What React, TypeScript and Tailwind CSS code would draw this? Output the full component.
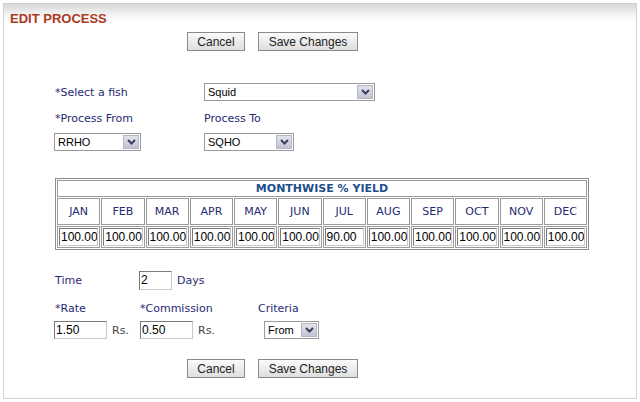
import React from 'react';

const months = ['JAN', 'FEB', 'MAR', 'APR', 'MAY', 'JUN', 'JUL', 'AUG', 'SEP', 'OCT', 'NOV', 'DEC'];
const yields = ['100.00', '100.00', '100.00', '100.00', '100.00', '100.00', '90.00', '100.00', '100.00', '100.00', '100.00', '100.00'];

function Btn({ label, className }: { label: string; className: string }) {
  return (
    <button
      className={`h-[19px] border border-[#8a8a8a] bg-gradient-to-b from-[#fbfbfb] to-[#dedede] text-[12px] leading-none text-[#222] font-['Liberation_Sans',Arial,sans-serif] ${className}`}
    >
      {label}
    </button>
  );
}

function Select({ value, className }: { value: string; className: string }) {
  return (
    <div className={`h-[18px] flex items-stretch border border-[#9a9a9a] bg-white ${className}`}>
      <span className="flex-1 pl-[3px] text-[11px] leading-[16px] text-black font-['Liberation_Sans',Arial,sans-serif]">{value}</span>
      <span className="w-[16px] m-[1px] flex items-center justify-center bg-gradient-to-b from-[#e2e3ec] to-[#c2c4d4] border border-[#b4b6c6]">
        <svg width="9" height="6" viewBox="0 0 9 6">
          <path d="M1 1 L4.5 4.5 L8 1" fill="none" stroke="#3c3f5c" strokeWidth="2" />
        </svg>
      </span>
    </div>
  );
}

function TextBox({ value, className }: { value: string; className: string }) {
  return (
    <div
      className={`h-[18px] border border-[#7a7a7a] border-b-[#c8c8c8] border-r-[#c8c8c8] bg-white pl-[1px] text-[12px] leading-[16px] text-black overflow-hidden whitespace-nowrap font-['Liberation_Sans',Arial,sans-serif] ${className}`}
    >
      {value}
    </div>
  );
}

export default function App() {
  return (
    <div className="w-[640px] h-[402px] bg-white overflow-hidden font-['DejaVu_Sans',Verdana,sans-serif]">
      <div className="mt-[3px] ml-[3px] w-[634px] h-[396px] border border-[#d2d2d2] border-t-0">
        {/* Header */}
        <div className="h-[19px] bg-gradient-to-b from-[#d6d6d6] via-[#f0f0f0] to-white border-t border-[#cfcfcf] pl-[6px] pt-[2px]">
          <span className="text-[13px] leading-[14px] font-bold text-[#ad3a1e] font-['Liberation_Sans',Arial,sans-serif]">EDIT PROCESS</span>
        </div>

        <div className="text-[11px] leading-[13px] text-[#1f2a72]">
          {/* Top buttons */}
          <div className="mt-[10px] pl-[183px] flex gap-[13px]">
            <Btn label="Cancel" className="w-[58px]" />
            <Btn label="Save Changes" className="w-[100px]" />
          </div>

          {/* Fish */}
          <div className="mt-[32px] pl-[51px] flex items-center">
            <span className="w-[149px]">*Select a fish</span>
            <Select value="Squid" className="w-[171px]" />
          </div>

          {/* Process labels */}
          <div className="mt-[11px] pl-[51px] flex">
            <span className="w-[149px]">*Process From</span>
            <span>Process To</span>
          </div>
          <div className="mt-[8px] pl-[50px] flex">
            <Select value="RRHO" className="w-[87px]" />
            <div className="w-[63px]" />
            <Select value="SQHO" className="w-[90px]" />
          </div>

          {/* Yield table */}
          <div className="mt-[27px] pl-[51px]">
            <table className="w-[534px] table-fixed border-separate border-spacing-[1px] border border-[#8c8c8c]">
              <tbody>
                <tr>
                  <td colSpan={12} className="h-[17px] border border-[#9a9a9a] text-center font-bold text-[#1c4f8c]">
                    MONTHWISE % YIELD
                  </td>
                </tr>
                <tr>
                  {months.map(m => (
                    <td key={m} className="h-[27px] border border-[#9a9a9a] text-center text-[#1f2a72]">{m}</td>
                  ))}
                </tr>
                <tr>
                  {yields.map((v, i) => (
                    <td key={i} className="h-[21px] border border-[#9a9a9a] p-[1px]">
                      <TextBox value={v} className="w-full" />
                    </td>
                  ))}
                </tr>
              </tbody>
            </table>
          </div>

          {/* Time */}
          <div className="mt-[21px] pl-[51px] flex items-center">
            <span className="w-[84px]">Time</span>
            <TextBox value="2" className="w-[33px] h-[19px]" />
            <span className="ml-[5px]">Days</span>
          </div>

          {/* Rate / Commission / Criteria */}
          <div className="mt-[12px] pl-[51px] flex">
            <span className="w-[85px]">*Rate</span>
            <span className="w-[118px]">*Commission</span>
            <span>Criteria</span>
          </div>
          <div className="mt-[6px] pl-[50px] flex items-center">
            <TextBox value="1.50" className="w-[53px]" />
            <span className="ml-[5px] w-[28px] text-[#444]">Rs.</span>
            <TextBox value="0.50" className="w-[53px]" />
            <span className="ml-[5px] w-[66px] text-[#444]">Rs.</span>
            <Select value="From" className="w-[55px]" />
          </div>

          {/* Bottom buttons */}
          <div className="mt-[20px] pl-[183px] flex gap-[13px]">
            <Btn label="Cancel" className="w-[58px]" />
            <Btn label="Save Changes" className="w-[100px]" />
          </div>
        </div>
      </div>
    </div>
  );
}
